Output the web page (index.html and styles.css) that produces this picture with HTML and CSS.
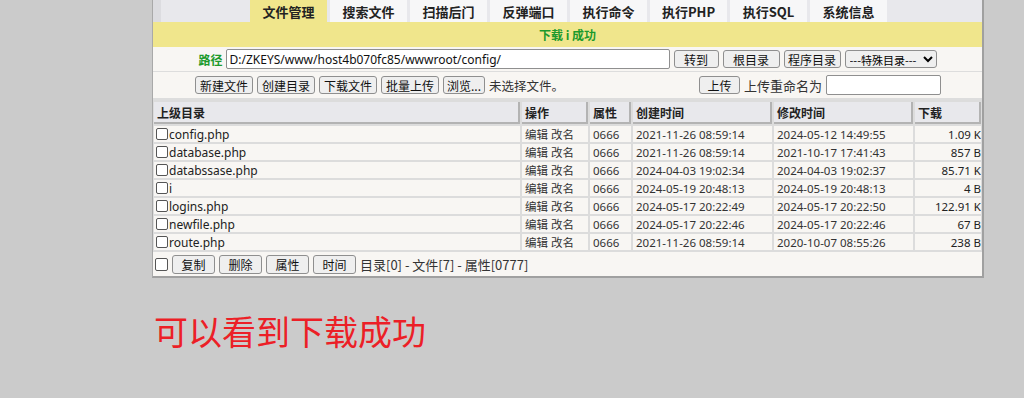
FILE: index.html
```html
<!doctype html>
<html>
<head>
  <meta charset="utf-8">
  <title>文件管理</title>
  <link rel="stylesheet" href="styles.css">
</head>
<body>
  <div class='panel'>
    <div class='tabs'>
      <div class='tab active'>文件管理</div>
      <div class='tab'>搜索文件</div>
      <div class='tab'>扫描后门</div>
      <div class='tab'>反弹端口</div>
      <div class='tab'>执行命令</div>
      <div class='tab'>执行PHP</div>
      <div class='tab'>执行SQL</div>
      <div class='tab'>系统信息</div>
    </div>
    <div class='msg'>下载 i 成功</div>

    <div class='pathbar'>
      <span class='label'>路径</span>
      <input class='path' type='text' value='D:/ZKEYS/www/host4b070fc85/wwwroot/config/'>
      <button class='btn go'>转到</button>
      <button class='btn dir'>根目录</button>
      <button class='btn dir'>程序目录</button>
      <select class='sel'><option>---特殊目录---</option></select>
    </div>

    <div class='toolbar'>
      <div class='group'>
        <button class='btn tool'>新建文件</button>
        <button class='btn tool'>创建目录</button>
        <button class='btn tool'>下载文件</button>
        <button class='btn tool'>批量上传</button>
        <button class='btn browse'>浏览...</button>
        <span class='note'>未选择文件。</span>
      </div>
      <div class='group'>
        <button class='btn up'>上传</button>
        <span class='note big'>上传重命名为</span>
        <input class='rename' type='text'>
      </div>
    </div>

    <div class='grid'>
      <div class='th'>上级目录</div>
      <div class='th'>操作</div>
      <div class='th'>属性</div>
      <div class='th'>创建时间</div>
      <div class='th'>修改时间</div>
      <div class='th'>下载</div>

      <div class='td name'><span class='box'></span>config.php</div>
      <div class='td'>编辑 改名</div><div class='td'>0666</div>
      <div class='td'>2021-11-26 08:59:14</div><div class='td'>2024-05-12 14:49:55</div>
      <div class='td size'>1.09 K</div>

      <div class='td name'><span class='box'></span>database.php</div>
      <div class='td'>编辑 改名</div><div class='td'>0666</div>
      <div class='td'>2021-11-26 08:59:14</div><div class='td'>2021-10-17 17:41:43</div>
      <div class='td size'>857 B</div>

      <div class='td name'><span class='box'></span>databssase.php</div>
      <div class='td'>编辑 改名</div><div class='td'>0666</div>
      <div class='td'>2024-04-03 19:02:34</div><div class='td'>2024-04-03 19:02:37</div>
      <div class='td size'>85.71 K</div>

      <div class='td name'><span class='box'></span>i</div>
      <div class='td'>编辑 改名</div><div class='td'>0666</div>
      <div class='td'>2024-05-19 20:48:13</div><div class='td'>2024-05-19 20:48:13</div>
      <div class='td size'>4 B</div>

      <div class='td name'><span class='box'></span>logins.php</div>
      <div class='td'>编辑 改名</div><div class='td'>0666</div>
      <div class='td'>2024-05-17 20:22:49</div><div class='td'>2024-05-17 20:22:50</div>
      <div class='td size'>122.91 K</div>

      <div class='td name'><span class='box'></span>newfile.php</div>
      <div class='td'>编辑 改名</div><div class='td'>0666</div>
      <div class='td'>2024-05-17 20:22:46</div><div class='td'>2024-05-17 20:22:46</div>
      <div class='td size'>67 B</div>

      <div class='td name'><span class='box'></span>route.php</div>
      <div class='td'>编辑 改名</div><div class='td'>0666</div>
      <div class='td'>2021-11-26 08:59:14</div><div class='td'>2020-10-07 08:55:26</div>
      <div class='td size'>238 B</div>
    </div>

    <div class='footer'>
      <span class='box'></span>
      <button class='btn act'>复制</button>
      <button class='btn act'>删除</button>
      <button class='btn act'>属性</button>
      <button class='btn act'>时间</button>
      <span class='note big'>目录[0] - 文件[7] - 属性[0777]</span>
    </div>
  </div>

  <div class='caption'>可以看到下载成功</div>
</body>
</html>
```

FILE: styles.css
```css
body{
  margin: 0;
  background-color: #cbcbcb;
  font-family: "Noto Sans CJK SC", "Noto Sans", sans-serif;
  font-size: 12px;
  color: #222;
}
.panel{
  margin-left: 152px;
  width: 829px;
  background-color: #f8f6f3;
  border-left: 1px solid #a9a9a9;
  border-right: 2px solid #a0a0a0;
  border-bottom: 2px solid #a0a0a0;
}
/* tabs */
.tabs{
  display: flex;
  gap: 3px;
  height: 22px;
  padding-left: 89px;
  background-color: #e8e8ec;
  border-left: 8px solid #dcdce0;
}
.tab{
  width: 77px;
  height: 22px;
  line-height: 24px;
  text-align: center;
  background-color: #f7f7f8;
  font-weight: bold;
  font-size: 13px;
  color: #222;
}
.tab.active{
  background-color: #f0e68c;
}
.msg{
  height: 25px;
  line-height: 25px;
  text-align: center;
  background-color: #f0e68c;
  color: #1d9a2c;
  font-weight: bold;
}
/* path + toolbar */
.pathbar{
  display: flex;
  align-items: center;
  justify-content: center;
  gap: 4px;
  height: 24px;
  border-bottom: 1px solid #dddddd;
}
.label{
  color: #1d9a2c;
  font-weight: bold;
  font-size: 12px;
  margin-right: -1px;
}
.path{
  box-sizing: border-box;
  width: 444px;
  height: 20px;
  padding: 1px 3px;
  border: 1px solid #8f8f8f;
  border-radius: 2px;
  font-family: "Noto Sans", sans-serif;
  font-size: 12px;
  color: #111;
  background: #fff;
}
.btn{
  box-sizing: border-box;
  height: 18px;
  padding: 0;
  border: 1px solid #8f8f8f;
  border-radius: 3px;
  background-color: #efefef;
  font-family: "Noto Sans CJK SC", sans-serif;
  font-size: 12px;
  line-height: 15px;
  color: #111;
}
.btn.go{ width: 45px; }
.btn.dir{ width: 57px; }
.btn.tool{ width: 58px; }
.btn.browse{ width: 42px; }
.btn.up{ width: 41px; }
.sel{
  box-sizing: border-box;
  height: 18px;
  width: 92px;
  border: 1px solid #8f8f8f;
  border-radius: 3px;
  background-color: #efefef;
  font-family: "Noto Sans CJK SC", sans-serif;
  font-size: 11px;
  padding: 0;
}
.toolbar{
  display: flex;
  justify-content: space-between;
  align-items: center;
  height: 26px;
  padding: 0 41px 0 42px;
  border-bottom: 2px solid #dddddd;
}
.group{
  display: flex;
  align-items: center;
  gap: 4px;
}
.note{
  color: #333;
  font-size: 12.5px;
}
.note.big{
  font-size: 13px;
}
.rename{
  box-sizing: border-box;
  width: 115px;
  height: 20px;
  padding: 1px 2px;
  border: 1px solid #8f8f8f;
  border-radius: 2px;
  background: #fff;
}
/* file list */
.grid{
  display: grid;
  grid-template-columns: 366px 66px 41px 139px 139px 66px;
  grid-auto-rows: 16px;
  grid-template-rows: 22px;
  gap: 2px;
  padding: 2px 1px 2px 1px;
  background-color: #dcdcdc;
}
.th{
  background-color: #e8e8ec;
  border-right: 2px solid #b3b3b3;
  border-bottom: 2px solid #b3b3b3;
  padding-left: 3px;
  line-height: 22px;
  font-weight: bold;
  color: #222;
}
.td{
  background-color: #f8f6f3;
  padding-left: 3px;
  line-height: 17px;
  font-family: "Noto Sans", "Noto Sans CJK SC", sans-serif;
  font-size: 11.5px;
  color: #333;
  white-space: nowrap;
  overflow: hidden;
}
.td.name{
  display: flex;
  align-items: center;
  padding-left: 2px;
  font-size: 12px;
  color: #222;
}
.td.size{
  text-align: right;
  padding-right: 0;
  color: #222;
}
.box{
  display: inline-block;
  width: 10px;
  height: 10px;
  border: 1px solid #555;
  border-radius: 2px;
  background: #fff;
  margin-right: 1px;
}
.footer{
  display: flex;
  align-items: center;
  gap: 4px;
  height: 24px;
  padding-left: 2px;
}
.footer .box{
  width: 11px;
  height: 11px;
  margin-right: 0;
}
.btn.act{
  width: 43px;
  height: 19px;
}
.caption{
  margin: 28px 0 0 154px;
  font-size: 34px;
  color: #ec1f27;
  font-family: "Noto Sans CJK SC", sans-serif;
}
```
